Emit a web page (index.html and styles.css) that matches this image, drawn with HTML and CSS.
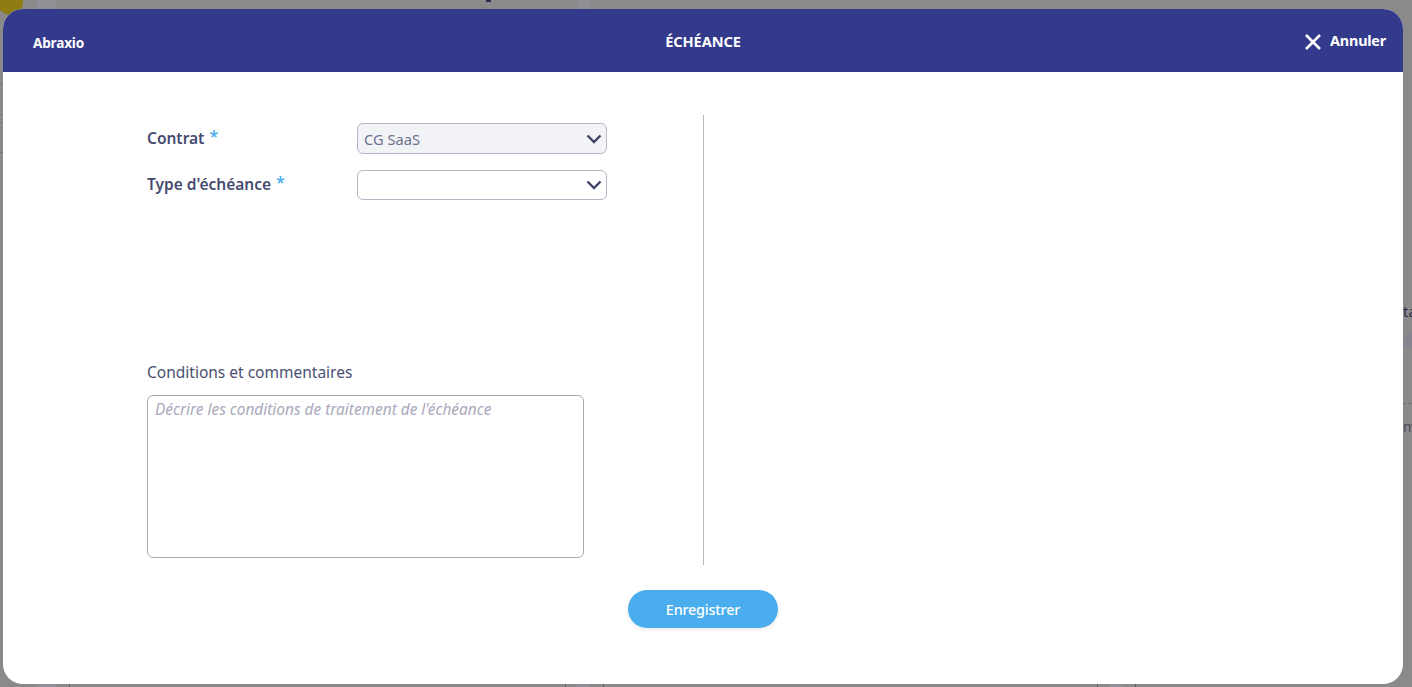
FILE: index.html
```html
<!DOCTYPE html>
<html lang="fr">
<head>
<meta charset="utf-8">
<title>Échéance</title>
<link rel="stylesheet" href="styles.css">
</head>
<body>
<div class="backdrop">
  <span class="bg-badge"></span>
  <span class="bg-strip bg-strip-a"></span>
  <span class="bg-strip bg-strip-b"></span>
  <span class="bg-strip-low"></span>
  <span class="bg-spot"></span>
  <span class="bg-line bg-line-1"></span>
  <span class="bg-line bg-line-4"></span>
  <span class="bg-line bg-line-2"></span>
  <span class="bg-line bg-line-3"></span>
  <span class="bg-right bg-right-ta">ta</span>
  <span class="bg-right bg-right-band"></span>
  <span class="bg-right bg-right-dash"></span>
  <span class="bg-right bg-right-ma">m</span>
  <span class="bg-tick bg-tick-1"></span>
  <span class="bg-tick bg-tick-4"></span>
  <span class="bg-tick bg-tick-2"></span>
  <span class="bg-tick bg-tick-5"></span>
  <span class="bg-tick bg-tick-3"></span>
</div>
<section class="modal">
  <header class="modal-header">
    <span class="brand">Abraxio</span>
    <h1 class="title">ÉCHÉANCE</h1>
    <button class="cancel" type="button">
      <svg class="cancel-icon" viewBox="0 0 18 18" width="18" height="18" aria-hidden="true"><path d="M2 2 16 16M16 2 2 16" fill="none" stroke="#fff" stroke-width="2.6"/></svg>
      <span>Annuler</span>
    </button>
  </header>
  <div class="modal-body">
    <div class="form-col">
      <div class="field-row">
        <label class="field-label">Contrat <span class="req">*</span></label>
        <div class="select select-disabled">
          <span>CG SaaS</span>
          <svg class="chevron" viewBox="0 0 16 10" width="16" height="10" aria-hidden="true"><path d="M1.5 1.5 8 8l6.500-6.500" fill="none" stroke="#3f4468" stroke-width="2.400"/></svg>
        </div>
      </div>
      <div class="field-row">
        <label class="field-label">Type d'échéance <span class="req">*</span></label>
        <div class="select">
          <span></span>
          <svg class="chevron" viewBox="0 0 16 10" width="16" height="10" aria-hidden="true"><path d="M1.5 1.5 8 8l6.500-6.500" fill="none" stroke="#3f4468" stroke-width="2.400"/></svg>
        </div>
      </div>
      <div class="comments">
        <label class="comments-label">Conditions et commentaires</label>
        <div class="textarea">Décrire les conditions de traitement de l'échéance</div>
      </div>
    </div>
    <div class="side-col"></div>
  </div>
  <div class="modal-footer">
    <button class="save" type="button">Enregistrer</button>
  </div>
</section>
</body>
</html>
```
FILE: styles.css
```css
* { box-sizing: border-box; }
html, body { margin: 0; height: 100%; overflow: hidden; }
body { font-family: "Noto Sans", "Open Sans", sans-serif; color: #3f4468; background: #8a8a8a; }

.backdrop { position: fixed; inset: 0; background: #8a8a8a; overflow: hidden; }
.bg-badge { position: absolute; left: -2px; top: -10px; width: 25px; height: 25px; border-radius: 50%; background: #8f7d12; }
.bg-strip { position: absolute; top: 0; bottom: 0; background: #8f8f96; }
.bg-strip-a { left: 37px; width: 19px; }
.bg-strip-b { left: 577px; width: 13px; }
.bg-strip-low { position: absolute; left: 1110px; width: 13px; bottom: 0; height: 3px; background: #8f8f96; }
.bg-spot { position: absolute; left: 486px; top: 0; width: 5px; height: 2px; background: #2a2c4a; }
.bg-line { position: absolute; left: 0; width: 3px; height: 1px; background: #777; }
.bg-line-1 { top: 84px; }
.bg-line-4 { top: 114px; }
.bg-line-2 { top: 122px; }
.bg-line-3 { top: 152px; }
.bg-right { position: absolute; left: 1403px; right: 0; }
.bg-right-ta { top: 301px; font-size: 15px; line-height: 20px; color: #2d3049; overflow: hidden; white-space: nowrap; }
.bg-right-band { top: 334px; height: 13px; background: #85858f; }
.bg-right-dash { top: 403px; border-top: 1px dashed #6e6e6e; }
.bg-right-ma { top: 418px; font-size: 14px; line-height: 18px; color: #4a4a58; overflow: hidden; }
.bg-tick { position: absolute; bottom: 0; width: 1px; height: 3px; background: #5d5d5d; }
.bg-tick-1 { left: 69px; }
.bg-tick-4 { left: 565px; }
.bg-tick-2 { left: 603px; }
.bg-tick-5 { left: 1097px; }
.bg-tick-3 { left: 1135px; }

.modal { position: fixed; left: 3px; top: 9px; width: 1400px; height: 675px; background: #fff; border-radius: 20px; overflow: hidden; display: flex; flex-direction: column; }
.modal-header { height: 63px; flex: none; background: #343a8b; color: #fff; display: grid; grid-template-columns: 1fr auto 1fr; align-items: center; padding: 2px 17px 0; }
.brand { margin-left: 13px; font-size: 13.6px; font-weight: 700; letter-spacing: -0.2px; position: relative; top: 1px; }
.title { margin: 0; font-size: 14.6px; font-weight: 700; letter-spacing: -0.1px; line-height: 1; }
.cancel { justify-self: end; display: flex; align-items: center; gap: 8px; background: none; border: 0; padding: 0; margin-top: -2px; color: #fff; font: 700 14.4px "Noto Sans", sans-serif; letter-spacing: -0.2px; }
.cancel-icon { display: block; position: relative; top: 1px; }

.modal-body { height: 450px; margin-top: 43px; flex: none; display: flex; }
.form-col { width: 701px; flex: none; padding: 8px 96px 0 144px; border-right: 1px solid #b9b9c0; display: flex; flex-direction: column; }
.side-col { flex: 1; }
.field-row { flex: none; display: flex; align-items: flex-start; height: 31px; margin-bottom: 16px; }
.field-row .field-label { width: 210px; flex: none; font-size: 15.5px; font-weight: 600; color: #464b70; line-height: 30px; }
.field-row + .field-row .field-label { margin-top: -1px; }
.req { color: #4cb0f0; font-size: 16px; position: relative; top: -2px; margin-left: 1px; }
.select { width: 250px; height: 30px; border: 1px solid #b7b5c6; border-radius: 6px; background: #fff; display: flex; align-items: center; justify-content: space-between; padding: 0 4px 0 6px; font-size: 14.7px; color: #6e7290; }
.select-disabled { height: 31px; background: #f2f3f6; }
.chevron { display: block; }
.comments { flex: none; margin-top: 145px; }
.comments-label { display: block; font-size: 15.5px; line-height: 20px; margin-bottom: 13px; color: #4a4f70; }
.textarea { width: 437px; height: 163px; border: 1px solid #a8a7b3; border-radius: 6px; padding: 4px 7px; font-size: 15.4px; line-height: 20px; font-style: italic; color: #a9a9bb; white-space: nowrap; }

.modal-footer { flex: 1; display: flex; justify-content: center; padding-top: 25px; }
.save { width: 150px; height: 38px; border: 0; border-radius: 19px; background: #4aaeee; color: #fff; font: 500 14.4px "Noto Sans", sans-serif; letter-spacing: -0.2px; box-shadow: 0 2px 4px rgba(0,0,0,.08); }
```
